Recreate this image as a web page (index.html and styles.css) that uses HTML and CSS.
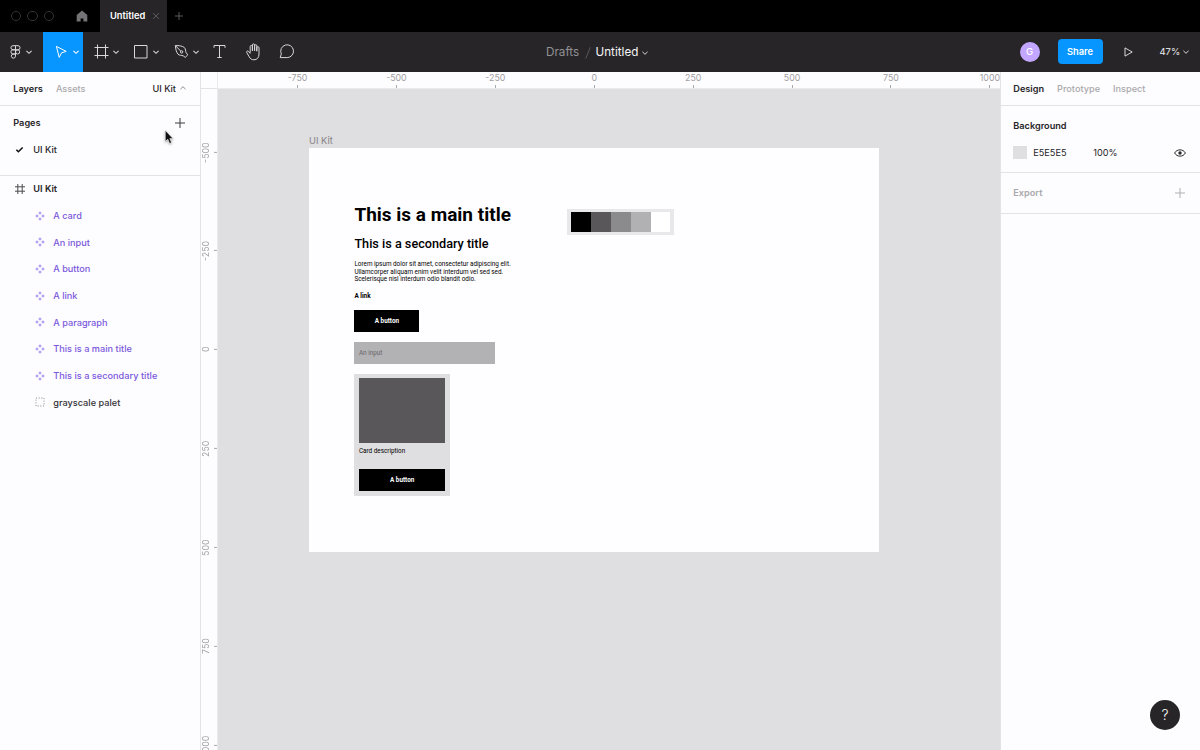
FILE: index.html
```html
<!DOCTYPE html>
<html lang="en">
<head>
<meta charset="utf-8">
<title>Untitled</title>
<link rel="stylesheet" href="styles.css">
</head>
<body>
<svg class="defs" width="0" height="0">
  <symbol id="chev" viewBox="0 0 8 8"><path d="M1.4 2.8 4 5.3l2.6-2.5"/></symbol>
  <symbol id="comp" viewBox="0 0 10 10"><path d="M5 .2 6.8 2 5 3.8 3.2 2zM5 6.2 6.8 8 5 9.8 3.2 8zM2 3.2 3.8 5 2 6.8.2 5zM8 3.2 9.8 5 8 6.8 6.2 5z"/></symbol>
</svg>
<div class="app">
  <header class="tabs">
    <div class="lights"><i></i><i></i><i></i></div>
    <svg class="home" viewBox="0 0 12 12"><path d="M6 .4.7 5v6.6h3.9V8.4h2.8v3.2h3.9V5z"/></svg>
    <div class="tab"><span>Untitled</span><svg class="line x" viewBox="0 0 8 8"><path d="m1 1 6 6M7 1 1 7"/></svg></div>
    <svg class="line plus" viewBox="0 0 8 8"><path d="M4 0v8M0 4h8"/></svg>
  </header>

  <nav class="toolbar">
    <div class="tools">
      <div class="tool logo"><svg class="line" width="11" height="14" viewBox="0 0 11 14"><path d="M5.5.7H3a2 2 0 0 0 0 4.1h2.5zM5.5.7H8a2 2 0 0 1 0 4.1H5.5zM5.5 4.8H3a2 2 0 0 0 0 4.2h2.5zM5.5 9H3a2.1 2.1 0 1 0 2.5 2.1zM5.5 6.9a2.1 2.1 0 1 0 4.2 0 2.1 2.1 0 0 0-4.2 0z"/></svg><svg class="line chev"><use href="#chev"/></svg></div>
      <div class="tool move"><svg class="line" width="12" height="14" viewBox="0 0 12 14"><path d="m1.4 1.4 9.8 5-4.6 1.4-2.4 4.6z"/></svg><svg class="line chev"><use href="#chev"/></svg></div>
      <div class="tool frame"><svg class="line" width="15" height="15" viewBox="0 0 15 15"><path d="M3.5.5v14M11.5.5v14M.5 3.5h14M.5 11.5h14"/></svg><svg class="line chev"><use href="#chev"/></svg></div>
      <div class="tool shape"><svg class="line" width="15" height="15" viewBox="0 0 15 15"><path d="M1.5 1.5h12.5v12.5H1.5z"/></svg><svg class="line chev"><use href="#chev"/></svg></div>
      <div class="tool pen"><svg class="line" width="15" height="15" viewBox="0 0 15 15"><path d="M1.4 1.6C5 1.4 8.6 2 10.4 3.6c1.4 1.4 1 3.6 1.8 5.2l1.6 2-2.6 2.6-2-1.6c-1.6-.6-3.8-.2-5.2-1.6C2.4 8.4 1.6 5 1.4 1.6l5.3 5.5"/><circle cx="7.6" cy="7.9" r="1.2"/></svg><svg class="line chev"><use href="#chev"/></svg></div>
      <div class="tool text"><svg class="line" width="13" height="15" viewBox="0 0 13 15"><path d="M1 3.8V1.5h11v2.3M6.5 1.5v12M4.3 13.5h4.4"/></svg></div>
      <div class="tool hand"><svg class="line" width="17" height="18" viewBox="0 0 17 18"><path d="M5.2 9.8V3.6a1.1 1.1 0 0 1 2.2 0V8M7.4 7.8V2a1.1 1.1 0 0 1 2.2 0v5.8M9.6 7.8V2.8a1.1 1.1 0 0 1 2.2 0v5.4M11.8 8.2V4.8a1.1 1.1 0 0 1 2.2 0V11c0 3.8-2 5.8-5 5.8-2.4 0-3.7-1-4.8-3L1.7 9.4c-.4-1.4 1.2-1.9 2-.8l1.5 2"/></svg></div>
      <div class="tool talk"><svg class="line" width="16" height="15" viewBox="0 0 16 15"><path d="M1.2 13.6 2.3 9.9A6.4 6.4 0 1 1 8.2 13.6z"/></svg></div>
    </div>
    <div class="crumb"><span class="drafts">Drafts</span><svg class="line slash" viewBox="0 0 6 12"><path d="M5.3.3.7 11.7"/></svg><span class="doc">Untitled</span><svg class="line chev"><use href="#chev"/></svg></div>
    <div class="actions">
      <div class="avatar">G</div>
      <div class="share">Share</div>
      <svg class="line play" viewBox="0 0 9 10"><path d="M1 .9 8.2 5 1 9.1z"/></svg>
      <span class="zoom">47%</span><svg class="line chev"><use href="#chev"/></svg>
    </div>
  </nav>

  <main class="body">
    <aside class="left">
      <div class="head"><b>Layers</b><span class="muted assets">Assets</span><span class="page">UI Kit</span><svg class="line chev up"><use href="#chev"/></svg></div>
      <section class="pages">
        <div class="pages-title"><b>Pages</b><svg class="line add" viewBox="0 0 10 10"><path d="M5 0v10M0 5h10"/></svg></div>
        <div class="row"><svg class="check" viewBox="0 0 8 8"><path d="M1.2 4.2 3 6l3.8-3.8"/></svg><span>UI Kit</span></div>
      </section>
      <section class="layers">
        <div class="row root"><svg class="grid" viewBox="0 0 10 10"><path d="M2.8 0v10M7.2 0v10M0 2.8h10M0 7.2h10"/></svg><b>UI Kit</b></div>
        <div class="row item"><svg><use href="#comp"/></svg>A card</div>
        <div class="row item"><svg><use href="#comp"/></svg>An input</div>
        <div class="row item"><svg><use href="#comp"/></svg>A button</div>
        <div class="row item"><svg><use href="#comp"/></svg>A link</div>
        <div class="row item"><svg><use href="#comp"/></svg>A paragraph</div>
        <div class="row item"><svg><use href="#comp"/></svg>This is a main title</div>
        <div class="row item"><svg><use href="#comp"/></svg>This is a secondary title</div>
        <div class="row item group"><svg viewBox="0 0 10 10"><path d="M1 1h8v8H1z"/></svg>grayscale palet</div>
      </section>
    </aside>

    <div class="corner"></div>
    <div class="ruler-x"><span>-750</span><span>-500</span><span>-250</span><span>0</span><span>250</span><span>500</span><span>750</span><span>1000</span></div>
    <div class="ruler-y"><span>-500</span><span>-250</span><span>0</span><span>250</span><span>500</span><span>750</span><span>1000</span></div>

    <div class="canvas">
      <div class="frame-label">UI Kit</div>
      <div class="artboard">
        <div class="kit">
          <h1>This is a main title</h1>
          <h2>This is a secondary title</h2>
          <p>Lorem ipsum dolor sit amet, consectetur adipiscing elit.<br>Ullamcorper aliquam enim velit interdum vel sed sed.<br>Scelerisque nisl interdum odio blandit odio.</p>
          <div class="link">A link</div>
          <div class="btn">A button</div>
          <div class="input">An input</div>
          <div class="card"><div class="photo"></div><div class="desc">Card description</div><div class="btn wide">A button</div></div>
        </div>
        <div class="palette"><i class="c1"></i><i class="c2"></i><i class="c3"></i><i class="c4"></i><i class="c5"></i></div>
      </div>
    </div>

    <aside class="right">
      <div class="head"><b>Design</b><span class="muted">Prototype</span><span class="muted">Inspect</span></div>
      <section class="background">
        <b>Background</b>
        <div class="fill"><i class="swatch"></i><span class="hex">E5E5E5</span><span>100%</span><svg class="eye" viewBox="0 0 12 8"><path d="M.6 4C2.9-.2 9.1-.2 11.4 4 9.1 8.2 2.9 8.2.6 4z"/><circle cx="6" cy="4" r="1.7"/></svg></div>
      </section>
      <section class="export"><b>Export</b><svg class="line add" viewBox="0 0 10 10"><path d="M5 0v10M0 5h10"/></svg></section>
    </aside>
  </main>
  <div class="help">?</div>
  <svg class="cursor" viewBox="0 0 12 18"><path d="M2 1.4v12l2.7-2.5 1.9 4.5 2.2-1-1.9-4.2h3.5z"/></svg>
</div>
</body>
</html>
```

FILE: styles.css
```css
* { box-sizing: border-box; }
body { margin: 0; font: 9.17px/1 Inter, sans-serif; color: #262528; background: #fdfcfe; overflow: hidden; }
b { font-weight: 600; }
svg { display: block; flex: none; }
.defs { position: absolute; }
.app { width: 1200px; height: 750px; display: flex; flex-direction: column; position: relative; overflow: hidden; }
.line { fill: none; stroke: currentColor; stroke-width: 1; }
.chev { width: 8px; height: 8px; }
.muted { color: #aaa9ac; font-weight: 500; }

.tabs { height: 32px; flex: none; background: #000; display: flex; align-items: center; color: #5a595c; }
.lights { display: flex; gap: 6.5px; padding-left: 10.5px; width: 76px; }
.lights i { width: 10.3px; height: 10.3px; border: 1px solid #343336; border-radius: 50%; }
.home { width: 12px; height: 12px; fill: #747376; }
.tab { width: 67px; height: 32px; margin-left: 12px; padding-left: 10px; background: #272528; color: #fff; font-weight: 600; font-size: 9.3px; display: flex; align-items: center; }
.tab span { width: 42px; white-space: nowrap; }
.x { width: 8px; height: 8px; color: #59585b; }
.plus { width: 8px; height: 8px; margin-left: 8px; }

.toolbar { height: 39.5px; flex: none; background: #272528; color: #d8d7da; display: grid; grid-template-columns: 546px 1fr auto; align-items: center; }
.tools { display: flex; height: 39.5px; }
.tool { display: flex; align-items: center; }
.tool .chev { margin-left: auto; stroke-width: 1.1; }
.logo { width: 43px; padding: 0 10.5px 0 9.5px; }
.move { width: 40px; padding: 0 3px 0 11.5px; background: #0795ff; color: #fff; }
.frame { width: 40px; padding: 0 3px 0 11px; }
.shape { width: 40px; padding: 0 3px 0 10px; }
.pen { width: 40px; padding: 0 3px 0 10.5px; }
.text { width: 32px; padding-left: 10px; }
.hand { width: 34px; padding-left: 9.5px; }
.talk { width: 33px; padding-left: 9.5px; }
.crumb { display: flex; align-items: center; font-size: 11.7px; padding-top: 1.5px; }
.drafts { color: #929194; width: 39px; }
.slash { width: 6px; height: 12px; color: #59585b; margin-right: 4.5px; }
.doc { color: #f5f4f6; width: 45.5px; }
.actions { display: flex; align-items: center; padding-right: 10.5px; }
.avatar { width: 20px; height: 20px; border-radius: 50%; background: #c3a6ff; color: #fff; display: grid; place-items: center; font-size: 9.6px; font-weight: 500; }
.share { width: 45px; height: 25px; margin-left: 18px; border-radius: 4px; background: #0795ff; color: #fff; display: grid; place-items: center; font-size: 9.3px; font-weight: 600; }
.play { width: 9px; height: 10px; margin-left: 21px; }
.zoom { width: 22px; margin-left: 27px; font-size: 9.3px; font-weight: 500; }

.body { flex: 1; min-height: 0; display: grid; grid-template-columns: 201px 17px 782px 200px; grid-template-rows: 17.5px 1fr; overflow: hidden; }
.left { grid-row: 1 / 3; border-right: 1px solid #e3e2e4; }
.head { height: 34.5px; border-bottom: 1px solid #e3e2e4; display: flex; align-items: center; padding: 0 13px; }
.left .head { padding-left: 13.3px; }
.left .assets { margin-left: 13px; }
.page { margin-left: auto; font-weight: 500; }
.up { transform: rotate(180deg); margin-left: 3px; color: #8d8c8f; }
.pages { height: 70px; border-bottom: 1px solid #e3e2e4; padding-top: 3.4px; }
.pages-title { height: 26.5px; display: flex; align-items: center; justify-content: space-between; padding: 0 15px 0 13.3px; }
.add { width: 10px; height: 10px; color: #3c3b3e; }
.row { height: 26.67px; display: flex; align-items: center; padding-left: 15.3px; font-weight: 500; white-space: nowrap; }
.check { width: 9px; height: 9px; margin-right: 9px; fill: none; stroke: #111; stroke-width: 1.4; }
.grid { width: 10px; height: 10px; margin-right: 8px; fill: none; stroke: #4b4a4d; stroke-width: 1; }
.layers { margin-top: -.3px; }
.item { padding-left: 35.2px; color: #7a58dc; letter-spacing: .02px; }
.item svg { width: 10px; height: 10px; margin-right: 8px; fill: #b5a1f2; }
.group { color: #333235; }
.group svg { fill: none; stroke: #929194; stroke-width: 1; stroke-dasharray: 1.1 1.56; }

.corner { border-right: 1px solid #ebeaec; border-bottom: 1px solid #e3e2e4; }
.ruler-x, .ruler-y { display: flex; overflow: hidden; color: #a19fa3; font-size: 8.8px; }
.ruler-x { padding-left: 30px; border-bottom: 1px solid #ebeaec; }
.ruler-x span { flex: none; width: 98.93px; height: 16.5px; display: flex; flex-direction: column; align-items: center; justify-content: space-between; padding-top: 2.5px; }
.ruler-x span::after { content: ""; width: 1px; height: 3px; background: #a9a8ab; }
.ruler-y { flex-direction: column; padding-top: 13.5px; border-right: 1px solid #ebeaec; }
.ruler-y span { flex: none; width: 16px; height: 98.9px; writing-mode: vertical-rl; transform: rotate(180deg); display: flex; flex-direction: column; align-items: center; justify-content: space-between; padding-right: 1.2px; }
.ruler-y span::after { content: ""; width: 3px; height: 1px; background: #a9a8ab; }

.canvas { background: #dfdee0; padding: 46px 0 0 91px; }
.frame-label { height: 12.7px; padding-top: 1px; font-size: 9.3px; color: #858487; }
.artboard { width: 570px; height: 404.4px; background: #fefdff; padding: 56px 0 0 45.4px; display: flex; align-items: flex-start; color: #000; font-family: Roboto, sans-serif; }
.kit { width: 213px; font-size: 6.35px; }
.kit h1 { margin: 0; font-size: 19px; line-height: 22px; font-weight: 700; white-space: nowrap; }
.kit h2 { margin: 10px 0 0; font-size: 12.66px; line-height: 15px; font-weight: 500; white-space: nowrap; }
.kit p { margin: 10.5px 0 0; line-height: 7.5px; white-space: nowrap; }
.link { margin-top: 9.5px; line-height: 7px; font-weight: 700; }
.btn { width: 65px; height: 22px; margin-top: 9.6px; background: #000; color: #fff; display: grid; place-items: center; font-weight: 700; }
.input { width: 140.5px; height: 22px; margin-top: 10px; padding-left: 4.6px; background: #b2b1b3; color: #69686b; display: flex; align-items: center; }
.card { width: 95.5px; height: 122px; margin-top: 10px; padding: 4.5px 4.5px 0; background: #dfdee0; }
.photo { height: 64.5px; background: #59575a; }
.desc { margin-top: 5.5px; line-height: 7px; }
.btn.wide { width: 86.5px; margin-top: 14px; }
.palette { width: 107px; height: 26px; margin-top: 5.6px; background: #e8e7e9; padding: 3px 3px 3px 4px; display: flex; }
.palette i { width: 19.8px; height: 20px; }
.palette .c1 { background: #000; }
.palette .c2 { background: #59575a; }
.palette .c3 { background: #8b8a8c; }
.palette .c4 { background: #b1b0b2; }
.palette .c5 { background: #fff; }

.right { grid-column: 4; grid-row: 1 / 3; border-left: 1px solid #e3e2e4; }
.right .head { padding-left: 12.3px; gap: 13px; }
.background { height: 67.2px; border-bottom: 1px solid #e3e2e4; padding: 15px 14px 0 12.3px; }
.background b { display: block; height: 25px; }
.fill { display: flex; align-items: center; font-weight: 400; height: 13px; }
.swatch { width: 13.5px; height: 13.5px; background: #dfdee0; margin-right: 6.5px; }
.hex { width: 60px; }
.eye { width: 12px; height: 8px; margin-left: auto; fill: none; stroke: #29282b; stroke-width: 1; }
.eye circle { fill: #29282b; stroke: none; }
.export { height: 40.5px; border-bottom: 1px solid #e3e2e4; padding: 0 15px 0 12.3px; display: flex; align-items: center; justify-content: space-between; color: #aaa9ac; }
.export .add { color: #b0afb2; }

.help { position: absolute; right: 20px; bottom: 20px; width: 30px; height: 30px; border-radius: 50%; background: #272528; color: #fff; display: grid; place-items: center; font-size: 14px; font-weight: 300; }
.cursor { position: absolute; left: 163px; top: 129px; width: 12px; height: 17px; fill: #111; stroke: #fff; stroke-width: .7; filter: drop-shadow(0 1px 1px #0005); }
```
